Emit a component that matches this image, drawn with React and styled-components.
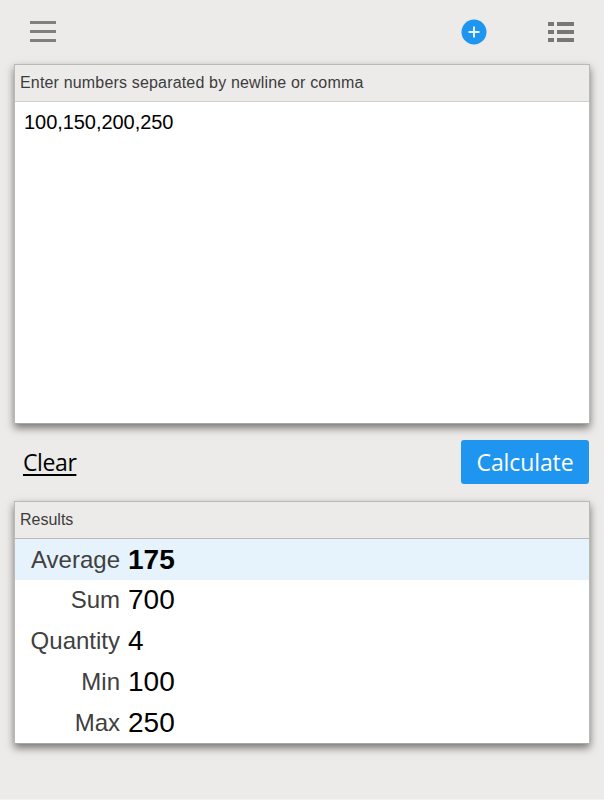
import React from "react";
import styled, { createGlobalStyle } from "styled-components";

const Global = createGlobalStyle`
  html, body { margin: 0; padding: 0; background: #f3f2f1; }
  body { font-family: "Liberation Sans", Arial, sans-serif; }
`;
const Page = styled.div`
  width: 604px; height: 799px; background: #ecebe9; box-sizing: border-box;
  padding: 0 14px; display: flex; flex-direction: column;
`;
const Toolbar = styled.div`
  height: 64px; display: flex; align-items: center; flex-shrink: 0;
  padding: 0 16px 0 16px;
`;
const Spacer = styled.div`flex: 1;`;
const IconSlot = styled.div`
  display: flex; margin-right: ${p => p.$gap || 0}px;
`;
const Panel = styled.div`
  border: 1px solid #b9b9b6; border-bottom: 0; background: #fff; flex-shrink: 0;
  box-shadow: 0 4px 8px rgba(0,0,0,.5);
`;
const PanelHeader = styled.div`
  height: 36px; background: #ecebe9; border-bottom: 1px solid ${p => p.$line};
  display: flex; align-items: center; padding-left: 5px;
  font-size: 16px; letter-spacing: ${p => p.$ls || 0}px; color: #3c3c3c;
`;
const InputArea = styled.div`
  height: 322px; box-sizing: border-box; padding: 9px 9px; font-size: 20px;
  letter-spacing: -0.05px; line-height: 23px; color: #000; border-bottom: 1px solid #a8a8a6;
`;
const Actions = styled.div`
  height: 44px; margin: 16px 1px 17px 0; display: flex; align-items: center;
  justify-content: space-between; flex-shrink: 0;
`;
const ClearLink = styled.a`
  font-family: "Open Sans", sans-serif; font-size: 23px; color: #000;
  text-decoration: underline; text-underline-offset: 3px; margin-left: 9px;
  letter-spacing: -0.4px;
`;
const CalcButton = styled.button`
  width: 128px; height: 44px; border: 0; border-radius: 3px; background: #1e96f0;
  color: #fff; font-family: "Open Sans", sans-serif; font-size: 23px; padding: 0;
  letter-spacing: -0.1px;
`;
const Row = styled.div`
  height: ${p => p.$h}px; display: grid; grid-template-columns: 105px 1fr; column-gap: 8px;
  align-items: center; background: ${p => p.$hi ? "#e6f3fc" : "#fff"};
`;
const Label = styled.div`
  text-align: right; font-size: 24px; color: #404040;
`;
const Value = styled.div`
  font-size: 28px; color: #000; font-weight: ${p => p.$hi ? 700 : 400};
`;
const ResultsEnd = styled.div`border-bottom: 1px solid #a8a8a6;`;

const Menu = () => (
  <svg width="26" height="22" viewBox="0 0 26 22">
    <g fill="#808080">
      <rect x="0" y="0" width="26" height="3" />
      <rect x="0" y="9" width="26" height="3" />
      <rect x="0" y="18" width="26" height="3" />
    </g>
  </svg>
);
const Plus = () => (
  <svg width="26" height="26" viewBox="0 0 26 26">
    <circle cx="13" cy="13" r="12.5" fill="#1e96f0" />
    <path d="M13 7.5v11M7.5 13h11" stroke="#e8f2fa" strokeWidth="2" />
  </svg>
);
const ListIcon = () => (
  <svg width="26" height="20" viewBox="0 0 26 20">
    <g fill="#777">
      <rect x="0" y="0" width="6" height="4" />
      <rect x="9" y="0" width="17" height="4" />
      <rect x="0" y="8" width="6" height="4" />
      <rect x="9" y="8" width="17" height="4" />
      <rect x="0" y="16" width="6" height="4" />
      <rect x="9" y="16" width="17" height="4" />
    </g>
  </svg>
);

const results = [
  ["Average", "175", 41, true],
  ["Sum", "700", 40],
  ["Quantity", "4", 41],
  ["Min", "100", 41],
  ["Max", "250", 41],
];

export default function App() {
  return (
    <Page>
      <Global />
      <Toolbar>
        <IconSlot><Menu /></IconSlot>
        <Spacer />
        <IconSlot $gap={61}><Plus /></IconSlot>
        <IconSlot><ListIcon /></IconSlot>
      </Toolbar>
      <Panel>
        <PanelHeader $line="#d0d0ce" $ls={0.17}>Enter numbers separated by newline or comma</PanelHeader>
        <InputArea>100,150,200,250</InputArea>
      </Panel>
      <Actions>
        <ClearLink>Clear</ClearLink>
        <CalcButton>Calculate</CalcButton>
      </Actions>
      <Panel>
        <PanelHeader $line="#b9b9b6">Results</PanelHeader>
        <ResultsEnd>
          {results.map(([label, value, h, hi]) => (
            <Row key={label} $h={h} $hi={hi}>
              <Label>{label}</Label>
              <Value $hi={hi}>{value}</Value>
            </Row>
          ))}
        </ResultsEnd>
      </Panel>
    </Page>
  );
}
